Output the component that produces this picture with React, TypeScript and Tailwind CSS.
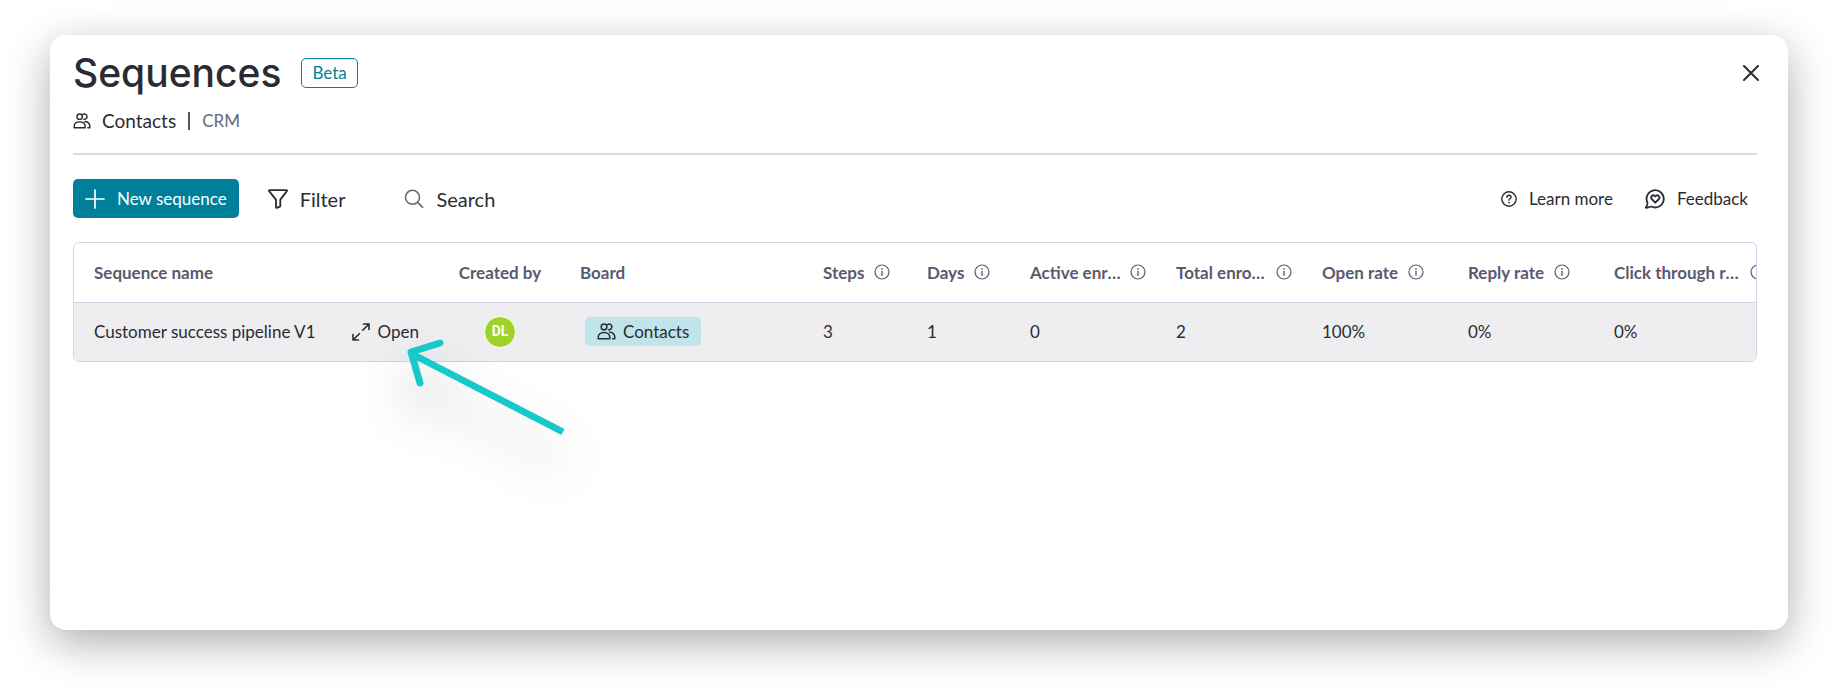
import React from "react";

type Column = {
  label: string;
  value: string;
  labelWidth?: string;
};

const columns: Column[] = [
  { label: "Steps", value: "3" },
  { label: "Days", value: "1" },
  { label: "Active enrolled", value: "0", labelWidth: "w-[92px]" },
  { label: "Total enrolled", value: "2", labelWidth: "w-[92px]" },
  { label: "Open rate", value: "100%" },
  { label: "Reply rate", value: "0%" },
  { label: "Click through rate", value: "0%", labelWidth: "w-[128px]" },
];

function PeopleIcon({ size }: { size: number }) {
  return (
    <svg width={size} height={size} viewBox="0 0 20 20" fill="none" stroke="currentColor" strokeWidth="1.6" strokeLinecap="round" strokeLinejoin="round" aria-hidden="true">
      <circle cx="7.4" cy="5.2" r="3" />
      <path d="M10.9 2.7a3 3 0 1 1 1.2 5.4" />
      <path d="M1.3 17.6v-1.4c0-3 2.4-5.2 6.1-5.2s6.1 2.2 6.1 5.2v1.4H1.3Z" />
      <path d="M13.3 10.6c3.2.4 5.4 2.6 5.4 5.6v1.4h-2.2" />
    </svg>
  );
}

function InfoIcon() {
  return (
    <svg width="16" height="16" viewBox="0 0 16 16" fill="none" stroke="currentColor" className="shrink-0" aria-hidden="true">
      <circle cx="8" cy="8" r="7" strokeWidth="1.2" />
      <path d="M8 7.3v4" strokeWidth="1.3" strokeLinecap="round" />
      <circle cx="8" cy="4.9" r="0.8" fill="currentColor" stroke="none" />
    </svg>
  );
}

function FilterIcon() {
  return (
    <svg width="20" height="20" viewBox="0 0 20 20" fill="none" stroke="currentColor" strokeWidth="1.8" strokeLinejoin="round" aria-hidden="true">
      <path d="M1.5 1.2h17c.5 0 .7.5.4.9L12.3 10.6v6.3c0 .3-.2.6-.5.7l-2.9 1.2c-.5.2-.9-.1-.9-.6v-7.6L1.1 2.1c-.3-.4-.1-.9.4-.9Z" />
    </svg>
  );
}

function SearchIcon() {
  return (
    <svg width="20" height="20" viewBox="0 0 20 20" fill="none" stroke="#676879" strokeWidth="1.6" strokeLinecap="round" aria-hidden="true">
      <circle cx="8.5" cy="8.3" r="7" />
      <path d="m13.6 13.4 5 5" />
    </svg>
  );
}

function HelpIcon() {
  return (
    <svg width="16" height="16" viewBox="0 0 16 16" fill="none" stroke="currentColor" strokeWidth="1.4" strokeLinecap="round" strokeLinejoin="round" aria-hidden="true">
      <circle cx="8" cy="8" r="7.2" />
      <path d="M5.9 6.3c0-1.2.9-2 2.1-2s2.1.8 2.1 1.9c0 1.5-2.1 1.6-2.1 3" />
      <circle cx="8" cy="11.6" r="0.9" fill="currentColor" stroke="none" />
    </svg>
  );
}

function FeedbackIcon() {
  return (
    <svg width="20" height="20" viewBox="0 0 20 20" fill="none" stroke="currentColor" strokeWidth="1.8" strokeLinecap="round" strokeLinejoin="round" aria-hidden="true">
      <path d="M2.5 13.7A8.6 8.6 0 1 1 6.3 17.5L1.3 18.9c-.4.1-.6-.2-.4-.5.9-1.2 1.700-2.800 1.600-4.700Z" />
      <path d="M10.3 13.7 6.7 10a2.2 2.2 0 0 1 3.1-3.1l.5.5.5-.5A2.2 2.2 0 0 1 13.9 10l-3.6 3.7Z" />
    </svg>
  );
}

function ExpandIcon() {
  return (
    <svg width="18" height="18" viewBox="0 0 18 18" fill="none" stroke="currentColor" strokeWidth="1.6" strokeLinecap="round" strokeLinejoin="round" aria-hidden="true">
      <path d="M11.5 1H17v5.500M17 1l-6.300 6.300M6.500 17H1v-5.500M1 17l6.300-6.300" />
    </svg>
  );
}

function App() {
  return (
    <div className="px-[50px] pt-[35px] pb-[65px] font-['Lato',sans-serif] text-[#2b2c33]">
      <main className="min-h-[595px] rounded-2xl bg-white pt-[13px] pr-[31px] pl-[23px] shadow-[0_13px_44px_rgba(0,0,0,0.32)]">
        {/* Header */}
        <header className="border-b-2 border-[#d5d9ea] pb-5">
          <div className="flex h-[50px] items-center">
            <h1 className="font-['Inter',sans-serif] text-[39px] leading-[50px] font-medium">
              Sequences
            </h1>
            <span className="ml-5 flex h-[30px] items-center rounded-[5px] border border-[#007f9b] px-[10px] text-[17px] text-[#007f9b]">
              Beta
            </span>
            <button aria-label="Close" className="ml-auto -mr-[6px] flex h-6 w-6 items-center justify-center">
              <svg width="16" height="16" viewBox="0 0 16 16" fill="none" stroke="currentColor" strokeWidth="2" strokeLinecap="round" aria-hidden="true">
                <path d="M1 1l14 14M15 1 1 15" />
              </svg>
            </button>
          </div>
          <div className="mt-[11px] flex h-6 items-center text-[19px]">
            <PeopleIcon size={18} />
            <span className="ml-[11px]">Contacts</span>
            <span className="mx-3 h-[18px] w-[2px] bg-[#55565d]" />
            <span className="text-[17px] text-[#676879]">CRM</span>
          </div>
        </header>

        {/* Toolbar */}
        <div className="mt-6 flex h-[39px] items-center">
          <button className="flex h-[39px] items-center rounded-[5px] bg-[#007f9b] px-3 text-[17px] text-white">
            <svg width="20" height="20" viewBox="0 0 20 20" stroke="currentColor" strokeWidth="1.7" strokeLinecap="round" aria-hidden="true">
              <path d="M10 1v18M1 10h18" />
            </svg>
            <span className="ml-3">New sequence</span>
          </button>
          <button className="ml-[29px] flex items-center gap-3 text-[20px]">
            <FilterIcon />
            Filter
          </button>
          <button className="ml-[59px] flex items-center gap-3 text-[20px]">
            <SearchIcon />
            Search
          </button>
          <div className="mr-[9px] ml-auto flex items-center gap-8 text-[17px]">
            <button className="flex items-center gap-3">
              <HelpIcon />
              Learn more
            </button>
            <button className="flex items-center gap-3">
              <FeedbackIcon />
              Feedback
            </button>
          </div>
        </div>

        {/* Sequences table */}
        <div className="relative mt-6">
          <div className="overflow-hidden rounded-md border border-[#d0d4e4]">
            <table className="w-[1710px] table-fixed border-collapse text-left text-[17px]">
              <colgroup>
                <col className="w-[366px]" />
                <col className="w-[120px]" />
                <col className="w-[243px]" />
                <col className="w-[104px]" />
                <col className="w-[103px]" />
                <col className="w-[146px]" />
                <col className="w-[146px]" />
                <col className="w-[146px]" />
                <col className="w-[146px]" />
                <col className="w-[190px]" />
              </colgroup>
              <thead>
                <tr className="h-[59px] border-b border-[#d0d4e4] text-[#595a70]">
                  <th className="pl-5 font-bold">Sequence name</th>
                  <th className="text-center font-bold">Created by</th>
                  <th className="pl-5 font-bold">Board</th>
                  {columns.map((col) => (
                    <th key={col.label} className="pl-5 font-bold">
                      <div className={`flex items-center ${col.labelWidth ? "gap-2" : "gap-[10px]"}`}>
                        <span className={col.labelWidth ? `truncate ${col.labelWidth}` : "whitespace-nowrap"}>
                          {col.label}
                        </span>
                        <InfoIcon />
                      </div>
                    </th>
                  ))}
                </tr>
              </thead>
              <tbody>
                <tr className="h-[59px] bg-[#eeeef0]">
                  <td className="pl-5">
                    <div className="flex items-center">
                      <span>Customer success pipeline V1</span>
                      <button className="ml-9 flex items-center gap-2">
                        <ExpandIcon />
                        Open
                      </button>
                    </div>
                  </td>
                  <td>
                    <div className="mx-auto flex h-8 w-8 items-center justify-center rounded-full border border-white bg-[#9cd326] font-['Roboto',sans-serif] text-[14px] font-bold text-white">
                      DL
                    </div>
                  </td>
                  <td className="pl-[25px]">
                    <span className="inline-flex h-[29px] items-center gap-[7px] rounded-[5px] bg-[#bfe4e9] px-3 align-middle">
                      <PeopleIcon size={19} />
                      Contacts
                    </span>
                  </td>
                  {columns.map((col) => (
                    <td key={col.label} className="pl-5">
                      {col.value}
                    </td>
                  ))}
                </tr>
              </tbody>
            </table>
          </div>

          {/* Arrow pointing at the Open button */}
          <svg
            width="176"
            height="110"
            viewBox="0 0 176 110"
            fill="none"
            stroke="#18c9cb"
            strokeWidth="7"
            strokeLinejoin="round"
            className="pointer-events-none absolute top-[93px] left-[327px] overflow-visible drop-shadow-[0_30px_24px_rgba(0,0,0,0.28)]"
            aria-hidden="true"
          >
            <path d="M12 19 163 97" />
            <path d="M40 8 11 17l9 31" strokeLinecap="round" />
          </svg>
        </div>
      </main>
    </div>
  );
}

export default App;
